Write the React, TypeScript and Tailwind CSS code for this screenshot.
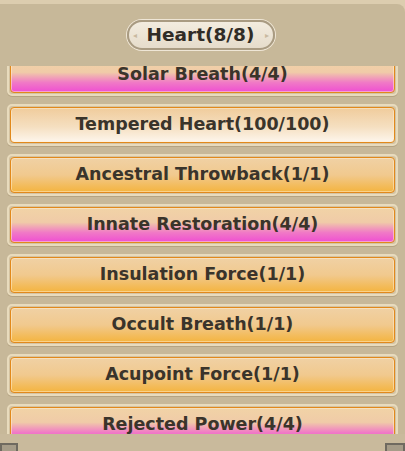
const items = [
  { l: "Solar Breath(4/4)", kind: "pink" },
  { l: "Tempered Heart(100/100)", kind: "white" },
  { l: "Ancestral Throwback(1/1)", kind: "orange" },
  { l: "Innate Restoration(4/4)", kind: "pink" },
  { l: "Insulation Force(1/1)", kind: "orange" },
  { l: "Occult Breath(1/1)", kind: "orange" },
  { l: "Acupoint Force(1/1)", kind: "orange" },
  { l: "Rejected Power(4/4)", kind: "pink" },
];

const fills: Record<string, string> = {
  pink: "bg-[linear-gradient(to_bottom,#f1d3a6_0%,#f0cba8_42%,#f07ac6_72%,#ef4fd2_100%)]",
  white: "bg-[linear-gradient(to_bottom,#f0cc9c_0%,#f5dfc0_55%,#fdf6ec_100%)]",
  orange: "bg-[linear-gradient(to_bottom,#f0d1a4_0%,#f1c98e_50%,#f4b43f_100%)]",
};

const Row = ({ l, kind }: { l: string; kind: string }) => (
  <div className="h-[42px] rounded-[5px] border-2 border-[#e8dbbd] bg-[#d4c3a2] p-[1px] shadow-[0_1px_0_#b3a383]">
    <div
      className={`h-full rounded-[4px] border-[1.5px] border-[#e2891b] ${fills[kind]} flex items-center justify-center shadow-[inset_0_0_0_1px_rgba(255,240,210,0.5)]`}
    >
      <span className="font-['DejaVu_Sans',sans-serif] font-bold text-[17.5px] leading-none text-[#3a342b]">{l}</span>
    </div>
  </div>
);

export default function App() {
  return (
    <div className="w-[405px] h-[451px] bg-[#dccdaf] overflow-hidden flex flex-col">
      <div className="h-[4px] shrink-0" />
      <div className="flex-1 flex flex-col bg-[#c7b899] rounded-tr-[8px] w-[405px] overflow-hidden">
        {/* title */}
        <div className="h-[62px] shrink-0 flex items-center justify-center">
          <div className="relative h-[30px] w-[148px] -ml-[4px] rounded-full border-2 border-[#a99b82] bg-[linear-gradient(to_bottom,#f3ecdf,#e6dccb)] flex items-center justify-center shadow-[0_0_0_1px_#efe6d6]">
            <span className="absolute left-[4px] top-1/2 -translate-y-1/2 text-[8px] leading-none text-[#c9b9a0]">◂</span>
            <span className="absolute right-[4px] top-1/2 -translate-y-1/2 text-[8px] leading-none text-[#c9b9a0]">▸</span>
            <span className="font-['DejaVu_Sans',sans-serif] font-bold text-[18.5px] leading-none text-[#302c26]">Heart(8/8)</span>
          </div>
        </div>
        {/* list */}
        <div className="h-[368px] shrink-0 overflow-hidden">
          <div className="-mt-[12px] ml-[7px] w-[391px] flex flex-col gap-[8px]">
            {items.map((it) => (
              <Row key={it.l} l={it.l} kind={it.kind} />
            ))}
          </div>
        </div>
        {/* bottom bar */}
        <div className="flex-1 flex items-end justify-between bg-[#c9ba9c]">
          <div className="w-[18px] h-[8px] border-2 border-b-0 border-[#6f6a60] bg-[#a69c88]" />
          <div className="w-[20px] h-[8px] border-2 border-b-0 border-[#6f6a60] bg-[#a69c88]" />
        </div>
      </div>
    </div>
  );
}
